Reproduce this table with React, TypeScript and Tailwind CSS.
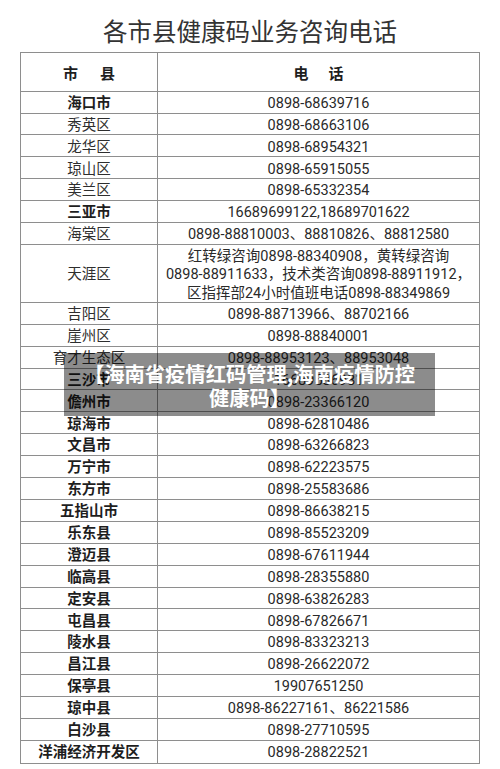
type Row = {
    name: string;
    phone: string[];
    bold?: boolean;
};

const rows: Row[] = [
    { name: '海口市', phone: ['0898-68639716'], bold: true },
    { name: '秀英区', phone: ['0898-68663106'] },
    { name: '龙华区', phone: ['0898-68954321'] },
    { name: '琼山区', phone: ['0898-65915055'] },
    { name: '美兰区', phone: ['0898-65332354'] },
    { name: '三亚市', phone: ['16689699122,18689701622'], bold: true },
    { name: '海棠区', phone: ['0898-88810003、88810826、88812580'] },
    {
        name: '天涯区',
        phone: [
            '红转绿咨询0898-88340908，黄转绿咨询',
            '0898-88911633，技术类咨询0898-88911912，',
            '区指挥部24小时值班电话0898-88349869',
        ],
    },
    { name: '吉阳区', phone: ['0898-88713966、88702166'] },
    { name: '崖州区', phone: ['0898-88840001'] },
    { name: '育才生态区', phone: ['0898-88953123、88953048'] },
    { name: '三沙市', phone: ['16689586981'], bold: true },
    { name: '儋州市', phone: ['0898-23366120'], bold: true },
    { name: '琼海市', phone: ['0898-62810486'], bold: true },
    { name: '文昌市', phone: ['0898-63266823'], bold: true },
    { name: '万宁市', phone: ['0898-62223575'], bold: true },
    { name: '东方市', phone: ['0898-25583686'], bold: true },
    { name: '五指山市', phone: ['0898-86638215'], bold: true },
    { name: '乐东县', phone: ['0898-85523209'], bold: true },
    { name: '澄迈县', phone: ['0898-67611944'], bold: true },
    { name: '临高县', phone: ['0898-28355880'], bold: true },
    { name: '定安县', phone: ['0898-63826283'], bold: true },
    { name: '屯昌县', phone: ['0898-67826671'], bold: true },
    { name: '陵水县', phone: ['0898-83323213'], bold: true },
    { name: '昌江县', phone: ['0898-26622072'], bold: true },
    { name: '保亭县', phone: ['19907651250'], bold: true },
    { name: '琼中县', phone: ['0898-86227161、86221586'], bold: true },
    { name: '白沙县', phone: ['0898-27710595'], bold: true },
    { name: '洋浦经济开发区', phone: ['0898-28822521'], bold: true },
];

function TableRow({ row, last }: { row: Row; last: boolean }) {
    const multi = row.phone.length > 1;
    return (
        <div className={`flex ${multi ? 'h-[58px]' : 'h-[21.9px]'} ${last ? '' : 'border-b border-[#8e8e8e]'}`}>
            <div
                className={`w-[137px] shrink-0 border-r border-[#8e8e8e] flex items-center justify-center pt-[4px] text-[14.5px] leading-none whitespace-nowrap ${
                    row.bold ? 'font-bold text-[#1e1e1e]' : 'text-[#2e2e2e]'
                }`}
            >
                {row.name}
            </div>
            <div className="flex-1 flex flex-col items-center justify-center pt-[4px] text-[14.5px] text-[#2a2a2a] whitespace-nowrap">
                {row.phone.map((line) => (
                    <div key={line} className={multi ? 'leading-[18.5px]' : 'leading-none'}>
                        {line}
                    </div>
                ))}
            </div>
        </div>
    );
}

export default function App() {
    return (
        <div className="relative w-[500px] h-[769px] overflow-hidden bg-white font-['Roboto','Noto_Sans_CJK_SC',sans-serif] text-[#333]">
            <h1 className="h-[52px] pt-[18px] text-center text-[24.5px] leading-[30px] font-normal text-[#333]">
                各市县健康码业务咨询电话
            </h1>

            <div className="mx-[20px] border border-[#8e8e8e]">
                <div className="flex h-[38.7px] border-b border-[#8e8e8e] text-[15px] font-bold text-[#1e1e1e]">
                    <div className="w-[137px] shrink-0 border-r border-[#8e8e8e] flex items-center justify-center gap-[22px] pt-[4px]">
                        <span>市</span>
                        <span>县</span>
                    </div>
                    <div className="flex-1 flex items-center justify-center gap-[20px] pt-[4px]">
                        <span>电</span>
                        <span>话</span>
                    </div>
                </div>
                {rows.map((row, i) => (
                    <TableRow key={row.name} row={row} last={i === rows.length - 1} />
                ))}
            </div>

            {/* caption over the picture */}
            <div className="absolute left-[64px] top-[353px] w-[371px] h-[63px] bg-black/45 flex flex-col items-center justify-center text-white text-[20.3px] font-bold leading-[24px] font-['Noto_Sans_CJK_SC',sans-serif]">
                <div>【海南省疫情红码管理,海南疫情防控</div>
                <div>健康码】</div>
            </div>
        </div>
    );
}
